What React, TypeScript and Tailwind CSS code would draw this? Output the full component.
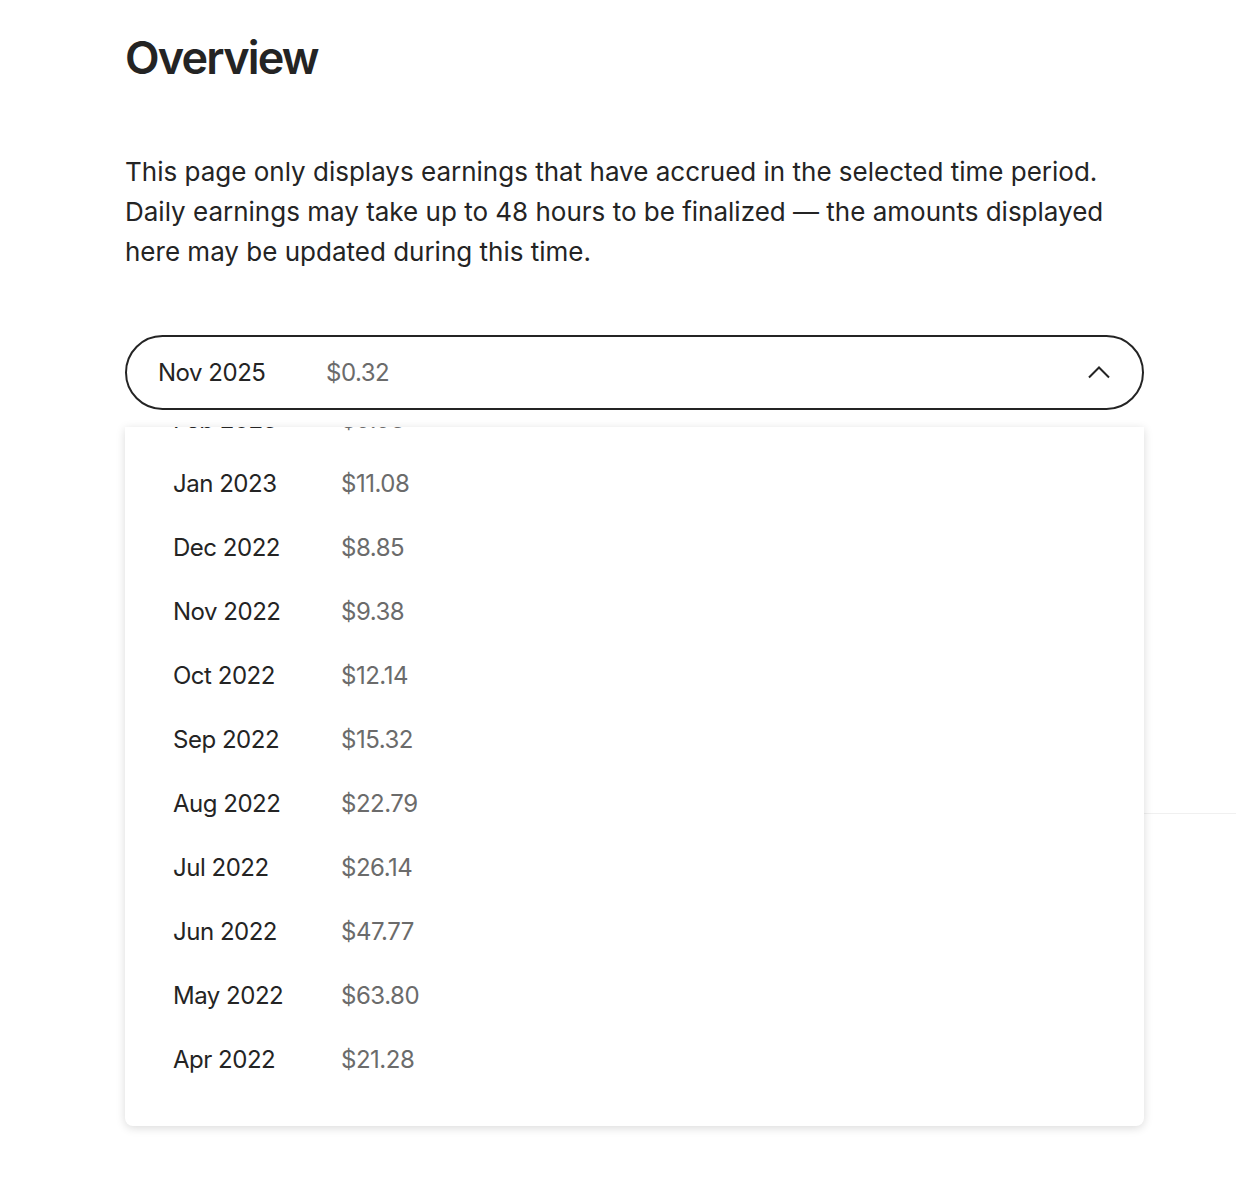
import React from "react";

const months = [
    { label: "Feb 2023", amount: "$9.93" },
    { label: "Jan 2023", amount: "$11.08" },
    { label: "Dec 2022", amount: "$8.85" },
    { label: "Nov 2022", amount: "$9.38" },
    { label: "Oct 2022", amount: "$12.14" },
    { label: "Sep 2022", amount: "$15.32" },
    { label: "Aug 2022", amount: "$22.79" },
    { label: "Jul 2022", amount: "$26.14" },
    { label: "Jun 2022", amount: "$47.77" },
    { label: "May 2022", amount: "$63.80" },
    { label: "Apr 2022", amount: "$21.28" },
];

export default function App() {
    return (
        <div className="min-h-[1199px] w-full bg-white text-[#242424] font-['Inter','Liberation_Sans',sans-serif]">
            <div className="ml-[125px] w-[1019px] pt-[28px]">
                <h1 className="text-[45px] leading-[60px] font-semibold tracking-[-0.04em]">Overview</h1>

                <p className="mt-[64px] text-[26px] leading-[40px] tracking-normal">
                    This page only displays earnings that have accrued in the selected time period. Daily earnings
                    may take up to 48 hours to be finalized — the amounts displayed here may be updated during this
                    time.
                </p>

                <div className="relative mt-[63px]">
                    {/* Month selector */}
                    <button className="flex h-[75px] w-full items-center rounded-full border-2 border-[#242424] pl-[31px] pr-[32px] text-[24px] tracking-[-0.02em]">
                        <span className="w-[168px] text-left">Nov 2025</span>
                        <span className="text-[#6b6b6b]">$0.32</span>
                        <svg className="ml-auto" width="22" height="13" viewBox="0 0 22 13" fill="none">
                            <path d="M1 11.5 L11 1.5 L21 11.5" stroke="#242424" strokeWidth="2" />
                        </svg>
                    </button>

                    {/* Content behind the menu */}
                    <div className="h-[403px]" />
                    <div className="mr-[-92px] border-t border-[#f0f0f0]" />
                    <div className="h-[380px]" />

                    {/* Dropdown menu */}
                    <div className="absolute left-0 top-[92px] h-[699px] w-full overflow-hidden rounded-b-lg bg-white shadow-[0_2px_10px_rgba(0,0,0,0.15)]">
                        <ul className="-mt-[39px]">
                            {months.map((m) => (
                                <li
                                    key={m.label}
                                    className="flex h-[64px] items-center pl-[48px] text-[24px] tracking-[-0.02em]"
                                >
                                    <span className="w-[168px]">{m.label}</span>
                                    <span className="text-[#6b6b6b]">{m.amount}</span>
                                </li>
                            ))}
                        </ul>
                    </div>
                </div>
            </div>
        </div>
    );
}
